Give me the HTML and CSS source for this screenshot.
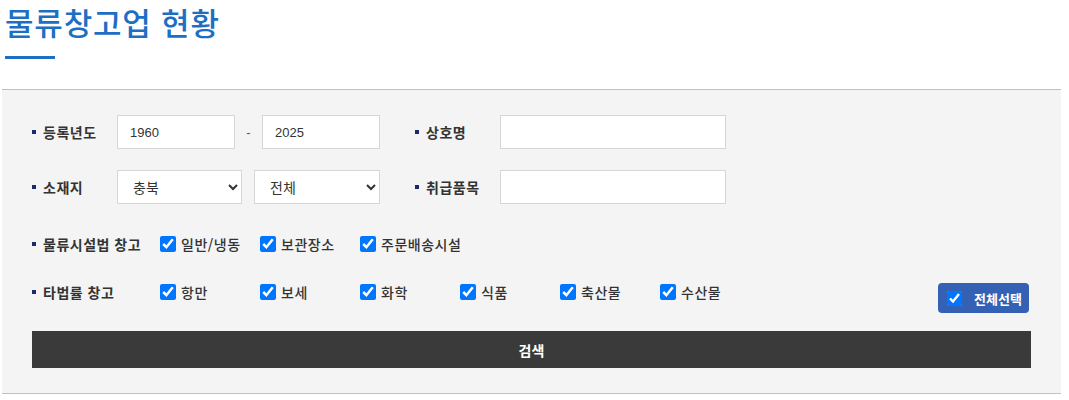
FILE: index.html
```html
<!DOCTYPE html>
<html lang="ko">
<head>
<meta charset="utf-8">
<title>물류창고업 현황</title>
<link rel="stylesheet" href="styles.css">
</head>
<body>
<div class="page">
  <h2 class="title">물류창고업 현황</h2>
  <div class="title-bar"></div>
  <form class="search-box" onsubmit="return false">
    <div class="row">
      <div class="label">등록년도</div>
      <div class="field">
        <input class="text-input year" type="text" value="1960">
        <span class="dash">-</span>
        <input class="text-input year" type="text" value="2025">
      </div>
      <div class="label label-second">상호명</div>
      <input class="text-input wide" type="text">
    </div>
    <div class="row row-2">
      <div class="label">소재지</div>
      <div class="field">
        <select class="select select-1"><option>충북</option></select>
        <select class="select select-2"><option>전체</option></select>
      </div>
      <div class="label label-second">취급품목</div>
      <input class="text-input wide" type="text">
    </div>
    <div class="row row-3">
      <div class="label label-long">물류시설법 창고</div>
      <label class="check"><input type="checkbox" checked>일반/냉동</label>
      <label class="check"><input type="checkbox" checked>보관장소</label>
      <label class="check"><input type="checkbox" checked>주문배송시설</label>
    </div>
    <div class="row row-4">
      <div class="label label-long">타법률 창고</div>
      <label class="check"><input type="checkbox" checked>항만</label>
      <label class="check"><input type="checkbox" checked>보세</label>
      <label class="check"><input type="checkbox" checked>화학</label>
      <label class="check"><input type="checkbox" checked>식품</label>
      <label class="check"><input type="checkbox" checked>축산물</label>
      <label class="check"><input type="checkbox" checked>수산물</label>
      <label class="all-btn"><input type="checkbox" checked>전체선택</label>
    </div>
    <button class="search-btn" type="submit">검색</button>
  </form>
</div>
</body>
</html>
```

FILE: styles.css
```css
html, body {
  margin: 0;
  padding: 0;
  background: #ffffff;
}

body {
  font-family: "Noto Sans CJK KR", "Noto Sans", sans-serif;
  color: #333333;
}

.title {
  margin: 0;
  padding-left: 5px;
  font-size: 31px;
  font-weight: 500;
  line-height: 44px;
  letter-spacing: 0.8px;
  color: #1d6fc3;
}

.title-bar {
  width: 50px;
  height: 3px;
  margin: 12px 0 0 5px;
  background: #1d6fc3;
}

.search-box {
  margin: 30px 8px 0 2px;
  padding: 25px 30px 25px 30px;
  background: #f4f4f4;
  border-top: 1px solid #b3c3d1;
  border-bottom: 1px solid #b3c3d1;
}

.row {
  display: flex;
  align-items: center;
  height: 34px;
}

.row-2 { margin-top: 21px; }
.row-3 { margin-top: 23px; }
.row-4 { margin-top: 14px; }

.label {
  display: flex;
  align-items: center;
  gap: 7px;
  width: 85px;
  flex: none;
  font-size: 14px;
  font-weight: 700;
  letter-spacing: 0.5px;
  white-space: nowrap;
  color: #333333;
}

.label::before {
  content: "";
  width: 4px;
  height: 4px;
  background: #1b2a6a;
  flex: none;
}

.label-long { width: 128px; }

.label-second { margin-left: 35px; }

.field {
  display: flex;
  align-items: center;
  width: 263px;
  flex: none;
}

.text-input {
  box-sizing: border-box;
  height: 34px;
  margin: 0;
  padding: 0 12px;
  border: 1px solid #d6d6d6;
  background: #ffffff;
  font-family: "Liberation Sans", Arial, sans-serif;
  font-size: 13px;
  color: #333333;
  outline: none;
}

.year { width: 118px; }
.wide { width: 226px; }

.dash {
  width: 27px;
  text-align: center;
  font-family: "Liberation Sans", Arial, sans-serif;
  font-size: 13px;
  color: #555555;
}

.select {
  box-sizing: border-box;
  height: 34px;
  margin: 0;
  padding: 0 6px 0 11px;
  border: 1px solid #d6d6d6;
  border-radius: 0;
  background: #ffffff;
  font-family: "Noto Sans CJK KR", "Noto Sans", sans-serif;
  font-size: 14px;
  color: #333333;
}

.select-1 { width: 125px; }
.select-2 { width: 126px; margin-left: 12px; }

.check {
  display: flex;
  align-items: center;
  gap: 5px;
  min-width: 100px;
  flex: none;
  font-size: 14px;
  font-weight: 500;
  letter-spacing: 0.5px;
  white-space: nowrap;
  color: #333333;
}

.check input,
.all-btn input {
  width: 16px;
  height: 16px;
  margin: 0;
  flex: none;
  accent-color: #0075ff;
}

.all-btn {
  display: flex;
  align-items: center;
  gap: 12px;
  box-sizing: border-box;
  width: 91px;
  height: 30px;
  margin: 12px 2px 0 auto;
  padding-left: 9px;
  background: #3461b3;
  border-radius: 4px;
  color: #ffffff;
  font-size: 13px;
  font-weight: 700;
  white-space: nowrap;
}

.all-btn input {
  width: 15px;
  height: 15px;
}

.search-btn {
  display: block;
  width: 100%;
  height: 37px;
  margin: 22px 0 0 0;
  padding: 0;
  border: none;
  background: #3a3a3a;
  color: #ffffff;
  font-family: "Noto Sans CJK KR", "Noto Sans", sans-serif;
  font-size: 14px;
  font-weight: 700;
}
```
